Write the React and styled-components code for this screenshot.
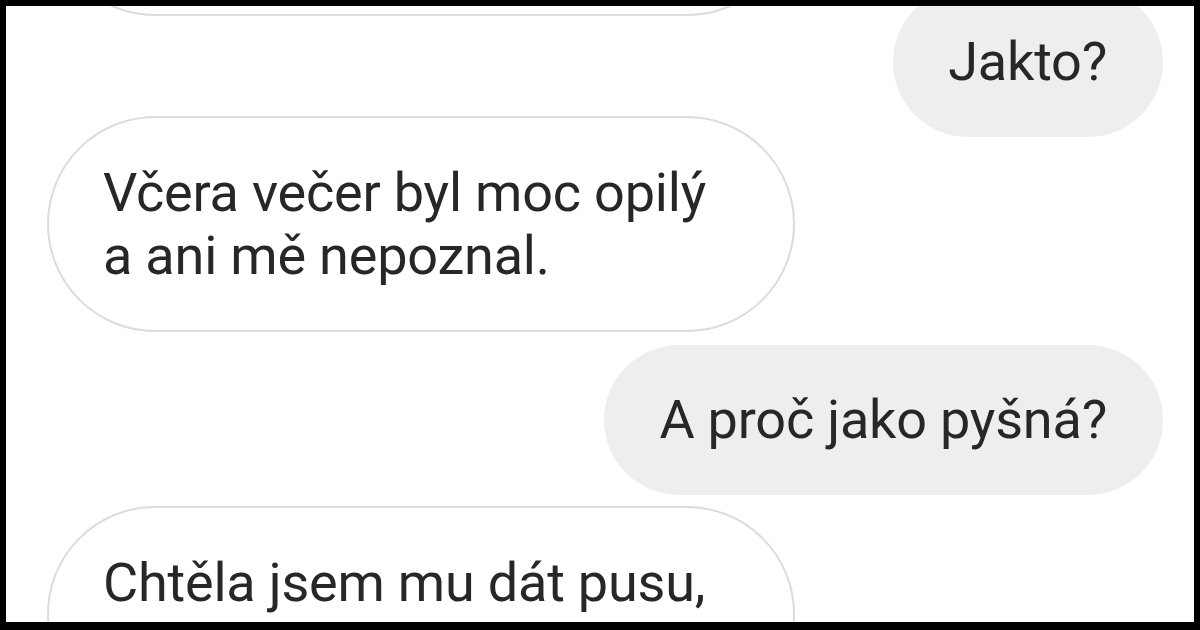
import styled, { createGlobalStyle } from "styled-components";

const messages = [
  { id: 1, from: "them", gap: -206, text: "" },
  { id: 2, from: "me", gap: -29, text: "Jakto?" },
  { id: 3, from: "them", gap: -21, text: "Včera večer byl moc opilý\na ani mě nepoznal." },
  { id: 4, from: "me", gap: 13, text: "A proč jako pyšná?" },
  { id: 5, from: "them", gap: 11, text: "Chtěla jsem mu dát pusu," },
];

const App = () => {
  return (
    <>
      <GlobalStyle />
      <Frame>
        <Screen>
          {messages.map((m) => (
            <Row key={m.id} $mine={m.from === "me"} $gap={m.gap}>
              <Bubble $mine={m.from === "me"}>
                {m.text
                  .split("\n")
                  .filter(Boolean)
                  .map((line, i) => (
                    <Line key={i}>{line}</Line>
                  ))}
              </Bubble>
            </Row>
          ))}
        </Screen>
      </Frame>
    </>
  );
};

export default App;

const GlobalStyle = createGlobalStyle`
  html, body {
    margin: 0;
    padding: 0;
    background: #000;
  }
`;

const Frame = styled.div`
  width: 1200px;
  height: 630px;
  box-sizing: border-box;
  padding: 6px 6px 8px 6px;
  background: #000;
  overflow: hidden;
`;

const Screen = styled.div`
  height: 100%;
  background: #fff;
  display: flex;
  flex-direction: column;
  overflow: hidden;
  padding: 0 31px 0 41px;
  font-family: Roboto, "Noto Sans", sans-serif;
  color: #272727;
`;

const Row = styled.div`
  display: flex;
  flex-shrink: 0;
  justify-content: ${(p) => (p.$mine ? "flex-end" : "flex-start")};
  margin-top: ${(p) => p.$gap}px;
`;

const Bubble = styled.div`
  box-sizing: border-box;
  display: flex;
  flex-direction: column;
  font-size: 54px;
  line-height: 63px;
  letter-spacing: -0.2px;
  ${(p) =>
    p.$mine
      ? `
    background: #eeeeee;
    height: 150px;
    padding: 43px 56px 0 55px;
    border-radius: 75px;
  `
      : `
    background: #fff;
    border: 2px solid #dcdcdc;
    width: 748px;
    height: 216px;
    padding: 43px 40px 0 54px;
    border-radius: 108px;
  `}
`;

const Line = styled.span`
  white-space: nowrap;
`;
